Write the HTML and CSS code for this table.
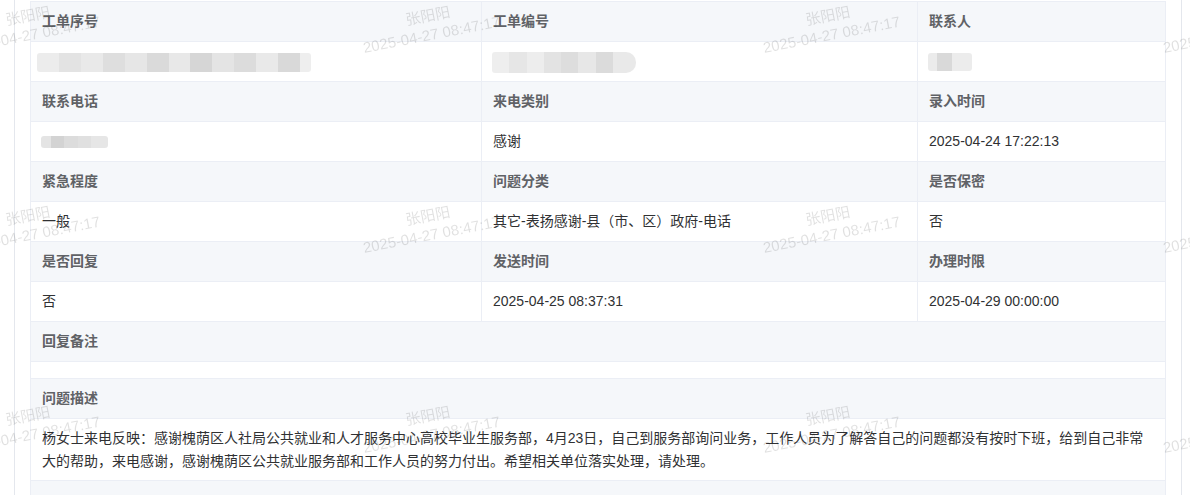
FILE: index.html
```html
<!DOCTYPE html>
<html lang="zh-CN">
<head>
<meta charset="utf-8">
<title>工单详情</title>
<link rel="stylesheet" href="styles.css">
</head>
<body>
<div class="page">
  <div class="panel">
    <div class="desc">
      <div class="cell label">工单序号</div>
      <div class="cell label">工单编号</div>
      <div class="cell label">联系人</div>
      <div class="cell value"><span class="mask mask-serial"></span></div>
      <div class="cell value"><span class="mask mask-code"></span></div>
      <div class="cell value"><span class="mask mask-name"></span></div>

      <div class="cell label">联系电话</div>
      <div class="cell label">来电类别</div>
      <div class="cell label">录入时间</div>
      <div class="cell value"><span class="mask mask-phone"></span></div>
      <div class="cell value">感谢</div>
      <div class="cell value">2025-04-24 17:22:13</div>

      <div class="cell label">紧急程度</div>
      <div class="cell label">问题分类</div>
      <div class="cell label">是否保密</div>
      <div class="cell value">一般</div>
      <div class="cell value">其它-表扬感谢-县（市、区）政府-电话</div>
      <div class="cell value">否</div>

      <div class="cell label">是否回复</div>
      <div class="cell label">发送时间</div>
      <div class="cell label">办理时限</div>
      <div class="cell value">否</div>
      <div class="cell value">2025-04-25 08:37:31</div>
      <div class="cell value">2025-04-29 00:00:00</div>

      <div class="cell label wide">回复备注</div>
      <div class="cell value wide empty"></div>

      <div class="cell label wide">问题描述</div>
      <div class="cell value wide text">杨女士来电反映：感谢槐荫区人社局公共就业和人才服务中心高校毕业生服务部，4月23日，自己到服务部询问业务，工作人员为了解答自己的问题都没有按时下班，给到自己非常大的帮助，来电感谢，感谢槐荫区公共就业服务部和工作人员的努力付出。希望相关单位落实处理，请处理。</div>

      <div class="cell label wide tail"></div>
    </div>
  </div>
</div>

<div class="watermarks" aria-hidden="true">
  <div class="wm-grid">
    <div class="wm"><div class="wm-text">张阳阳<br>2025-04-27 08:47:17</div></div>
    <div class="wm"><div class="wm-text">张阳阳<br>2025-04-27 08:47:17</div></div>
    <div class="wm"><div class="wm-text">张阳阳<br>2025-04-27 08:47:17</div></div>
    <div class="wm"><div class="wm-text">张阳阳<br>2025-04-27 08:47:17</div></div>
    <div class="wm"><div class="wm-text">张阳阳<br>2025-04-27 08:47:17</div></div>
    <div class="wm"><div class="wm-text">张阳阳<br>2025-04-27 08:47:17</div></div>
    <div class="wm"><div class="wm-text">张阳阳<br>2025-04-27 08:47:17</div></div>
    <div class="wm"><div class="wm-text">张阳阳<br>2025-04-27 08:47:17</div></div>
    <div class="wm"><div class="wm-text">张阳阳<br>2025-04-27 08:47:17</div></div>
    <div class="wm"><div class="wm-text">张阳阳<br>2025-04-27 08:47:17</div></div>
    <div class="wm"><div class="wm-text">张阳阳<br>2025-04-27 08:47:17</div></div>
    <div class="wm"><div class="wm-text">张阳阳<br>2025-04-27 08:47:17</div></div>
  </div>
</div>
</body>
</html>
```

FILE: styles.css
```css
html, body {
  margin: 0;
  padding: 0;
  height: 100%;
  overflow: hidden;
  background: #ffffff;
}

body {
  font-family: "Liberation Sans", "Noto Sans CJK SC", sans-serif;
  font-size: 14px;
  color: #303133;
}

.page {
  padding: 0 8px 0 14px;
}

.panel {
  min-height: 100vh;
  box-sizing: border-box;
  border-left: 1px solid #e4e7ed;
  border-right: 1px solid #e4e7ed;
  padding: 1px 15px 0 15px;
}

.desc {
  display: grid;
  grid-template-columns: 451px 436px 248px;
  border-top: 1px solid #ebeef5;
  border-left: 1px solid #ebeef5;
}

.cell {
  border-right: 1px solid #ebeef5;
  border-bottom: 1px solid #ebeef5;
  padding: 8px 11px;
  line-height: 23px;
}

.wide {
  grid-column: 1 / -1;
}

.label {
  background: #f5f7fa;
  color: #606266;
  font-weight: 700;
}

.value {
  background: #ffffff;
  color: #303133;
}

.value.empty {
  height: 0;
}

.value.text {
  padding: 8px 11px 7px;
}

.label.tail {
  height: 23px;
}

.mask {
  display: inline-block;
  vertical-align: middle;
  filter: blur(0.7px);
  border-radius: 3px;
}

.mask-serial {
  width: 274px;
  height: 19px;
  margin-left: -5px;
  background:
    linear-gradient(90deg,
      #ececec 0 8%, #e3e3e3 8% 16%, #e9e9e9 16% 24%, #dedede 24% 32%,
      #e6e6e6 32% 40%, #dadada 40% 48%, #e8e8e8 48% 56%, #d6d6d6 56% 64%,
      #e4e4e4 64% 72%, #dcdcdc 72% 80%, #e9e9e9 80% 88%, #d9d9d9 88% 96%, #eeeeee 96% 100%);
}

.mask-code {
  width: 144px;
  height: 21px;
  margin-left: -1px;
  background:
    linear-gradient(90deg,
      #eeeeee 0 12%, #e6e6e6 12% 24%, #ededed 24% 36%, #e3e3e3 36% 48%,
      #dddddd 48% 60%, #e7e7e7 60% 72%, #dbdbdb 72% 84%, #e9e9e9 84% 100%);
  border-radius: 3px 10px 10px 3px;
}

.mask-name {
  width: 44px;
  height: 18px;
  margin-left: -1px;
  background:
    linear-gradient(90deg, #ebebeb 0 20%, #d9d9d9 20% 55%, #ececec 55% 100%);
}

.mask-phone {
  width: 67px;
  height: 12px;
  margin-left: -1px;
  background:
    linear-gradient(90deg,
      #e4e4e4 0 15%, #d3d3d3 15% 35%, #dcdcdc 35% 55%, #e0e0e0 55% 75%, #e6e6e6 75% 100%);
}

.watermarks {
  position: fixed;
  top: 0;
  left: 0;
  right: 0;
  bottom: 0;
  overflow: hidden;
  pointer-events: none;
  z-index: 10;
}

.wm-grid {
  display: grid;
  grid-template-columns: repeat(4, 400px);
  grid-auto-rows: 200px;
  margin: -75px 0 0 -170px;
}

.wm {
  display: flex;
  align-items: center;
  justify-content: center;
}

.wm-text {
  transform: rotate(-11deg);
  text-align: center;
  font-family: "Liberation Sans", "Noto Sans CJK SC", sans-serif;
  font-size: 15px;
  line-height: 19px;
  color: rgba(0, 0, 0, 0.12);
  white-space: nowrap;
}
```
